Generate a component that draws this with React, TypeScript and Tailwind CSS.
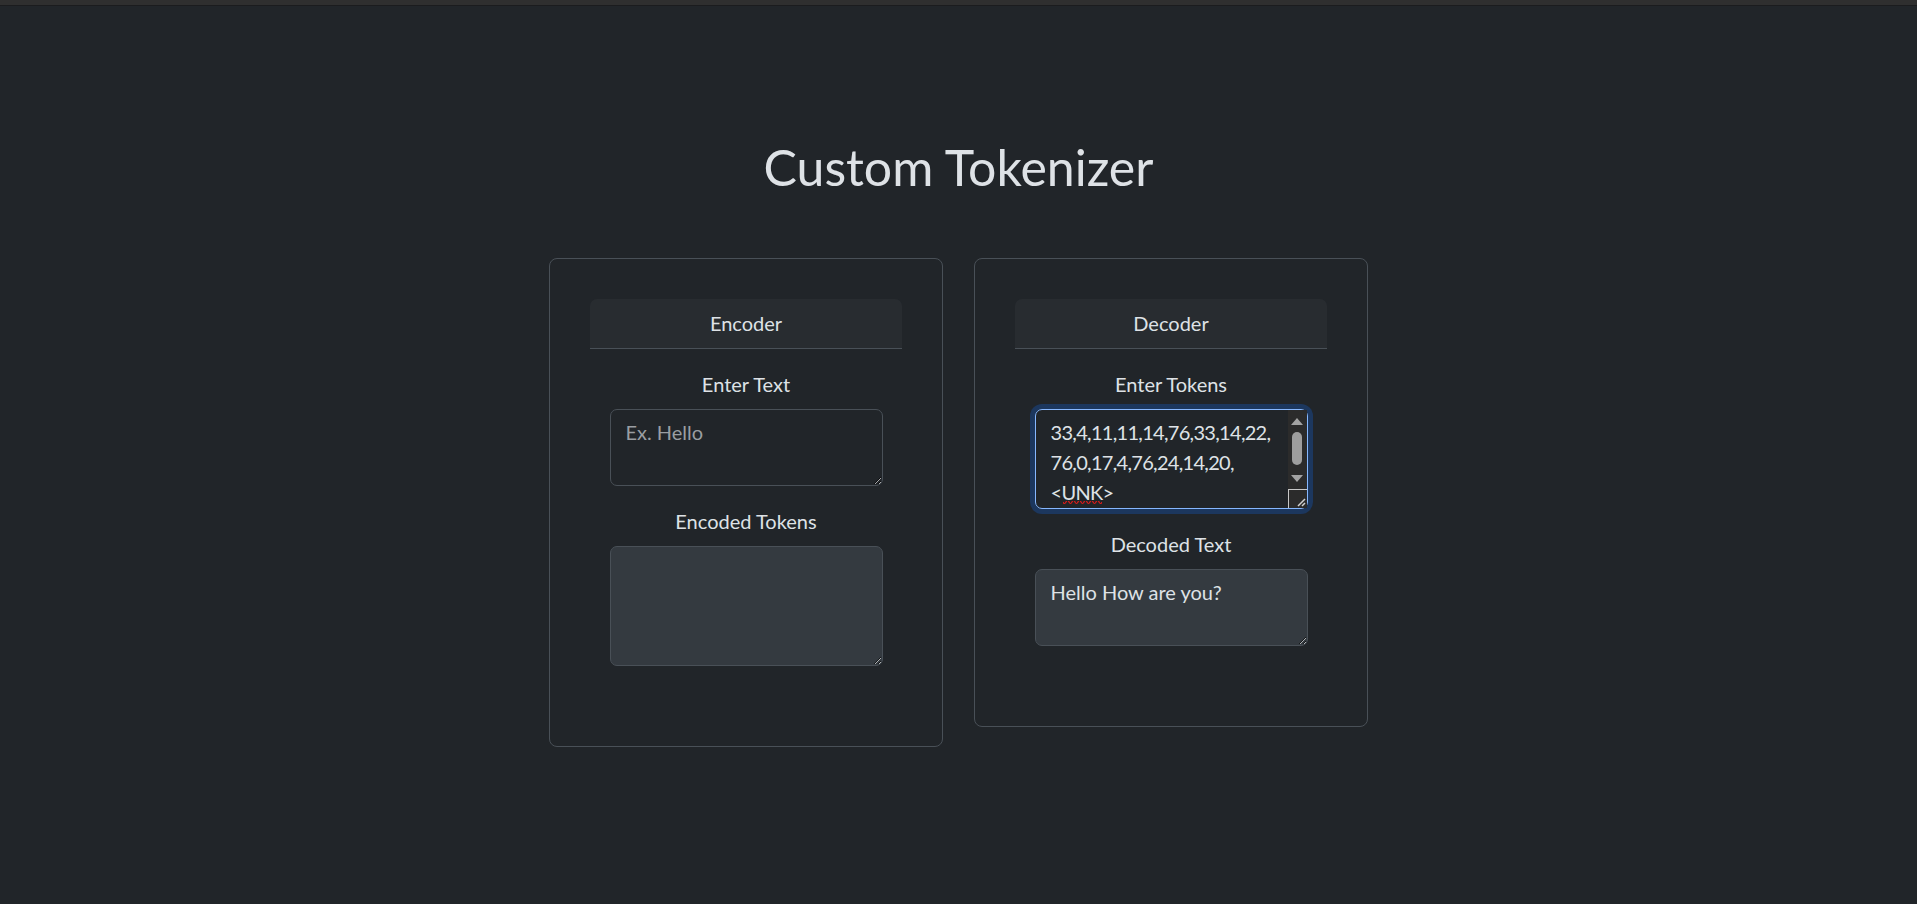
import React, { useState } from 'react';

const font = "font-['Segoe_UI',Lato,'Liberation_Sans',sans-serif]";

function FakeScrollbar() {
    // classic windows-style dark scrollbar, drawn over the focused textarea
    return (
        <div className="pointer-events-none absolute right-px top-px bottom-px flex w-[19px] flex-col items-center bg-[#2b2b2b]">
            <svg className="mt-[8px] h-[7px] w-[12px]" viewBox="0 0 12 7">
                <path d="M6 0L12 7H0z" fill="#a3a3a3" />
            </svg>
            <div className="mt-[7px] h-[33px] w-[10px] rounded-full bg-[#9e9e9e]" />
            <svg className="mt-[10px] h-[7px] w-[12px]" viewBox="0 0 12 7">
                <path d="M0 0h12L6 7z" fill="#a3a3a3" />
            </svg>
            <div className="relative mt-auto h-[19px] w-[19px] border-t border-l border-[#c8c8c8] bg-[#2b2b2b]">
                <svg className="absolute right-[1px] bottom-[1px] h-[9px] w-[9px]" viewBox="0 0 9 9">
                    <path d="M8 1L1 8M8 5L5 8" stroke="#d0d0d0" strokeWidth="1.5" />
                </svg>
            </div>
        </div>
    );
}

function Field({
    label,
    value,
    placeholder,
    readOnly,
    focused,
    height,
    onChange,
}: {
    label: string;
    value: string;
    placeholder?: string;
    readOnly?: boolean;
    focused?: boolean;
    height: string;
    onChange?: (v: string) => void;
}) {
    return (
        <div className="mb-[20px] flex flex-col items-center">
            <label className="mb-[10px] text-[20px] leading-[30px]">{label}</label>
            <div
                className={`relative w-[273px] ${height} rounded-[7px] ${focused ? 'shadow-[0_0_0_5px_#1c375e]' : ''}`}
            >
                <textarea
                    value={value}
                    placeholder={placeholder}
                    readOnly={readOnly}
                    spellCheck={false}
                    onChange={(e) => onChange?.(e.target.value)}
                    className={`block h-full w-full rounded-[7px] border py-[7px] pl-[15px] text-[20px] leading-[30px] text-[#dee2e6] placeholder:text-[#9a9ea2] outline-none [color-scheme:dark] ${readOnly ? 'bg-[#343a40]' : 'bg-[#212529]'
                        } ${focused
                            ? 'resize-none overflow-hidden whitespace-pre tracking-[-0.7px] border-[#86b7fe] pr-[21px]'
                            : 'border-[#495057] pr-[15px]'
                        }`}
                />
                {focused && (
                    <>
                        <FakeScrollbar />
                        <svg
                            className="pointer-events-none absolute left-[28px] top-[92px] h-[4px] w-[39px]"
                            viewBox="0 0 39 4"
                        >
                            <path
                                d="M0 1q1.5 3 3 0t3 0 3 0 3 0 3 0 3 0 3 0 3 0 3 0 3 0 3 0 3 0 3 0"
                                fill="none"
                                stroke="#e01b1b"
                                strokeWidth="1.2"
                            />
                        </svg>
                    </>
                )}
            </div>
        </div>
    );
}

function Card({ title, children }: { title: string; children: React.ReactNode }) {
    return (
        <div className="w-[394px] rounded-[8px] border border-[#495057] p-[40px]">
            <div className="h-[50px] rounded-t-[7px] border-b border-[#495057] bg-[#282c30] text-center text-[20px] leading-[49px]">
                {title}
            </div>
            <div className="px-[20px] pt-[20px] pb-[20px]">{children}</div>
        </div>
    );
}

export default function App() {
    const [text, setText] = useState('');
    const [tokens, setTokens] = useState('33,4,11,11,14,76,33,14,22,\n76,0,17,4,76,24,14,20,\n<UNK>');

    return (
        <div className={`min-h-screen bg-[#212529] text-[#dee2e6] ${font}`}>
            <div className="h-[5px] bg-[#2f2f2f]" />
            <div className="h-px bg-[#1b1c1e]" />
            <h1 className="mt-[131px] text-center text-[50px] leading-[60px] font-normal text-[#dee2e6]">
                Custom Tokenizer
            </h1>
            <div className="mt-[61px] flex items-start justify-center gap-[31px]">
                <Card title="Encoder">
                    <Field label="Enter Text" value={text} placeholder="Ex. Hello" height="h-[77px]" onChange={setText} />
                    <Field label="Encoded Tokens" value="" readOnly height="h-[120px]" />
                </Card>
                <Card title="Decoder">
                    <Field label="Enter Tokens" value={tokens} focused height="h-[100px]" onChange={setTokens} />
                    <Field label="Decoded Text" value="Hello How are you?" readOnly height="h-[77px]" />
                </Card>
            </div>
        </div>
    );
}
